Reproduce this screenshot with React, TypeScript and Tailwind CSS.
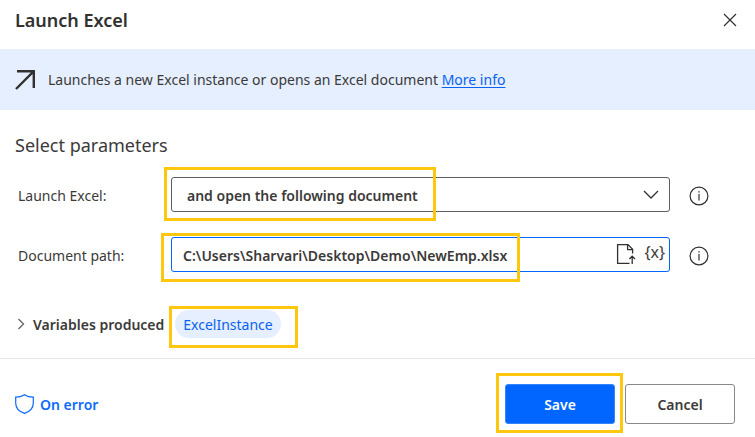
import type { ReactNode } from "react";

function Highlight({ className }: { className: string }) {
  return (
    <span
      aria-hidden="true"
      className={`pointer-events-none absolute border-3 border-[#fdc70e] ${className}`}
    />
  );
}

function InfoButton({ label }: { label: string }) {
  return (
    <button type="button" aria-label={label} className="ml-[19px] shrink-0 pt-[2px]">
      <svg className="block" width="20" height="20" viewBox="0 0 20 20" fill="none" stroke="#323130">
        <circle cx="10" cy="10" r="8.9" strokeWidth="1.2" />
        <path d="M10 8v6.5" strokeWidth="1.2" />
        <path d="M10 5.2v1.4" strokeWidth="1.4" />
      </svg>
    </button>
  );
}

function Field({ id, label, children }: { id: string; label: string; children: ReactNode }) {
  return (
    <div className="flex items-center">
      <label htmlFor={id} className="w-[153px] shrink-0 pt-[2px]">
        {label}:
      </label>
      <div className="relative flex-1">{children}</div>
      <InfoButton label={`About ${label}`} />
    </div>
  );
}

export default function App() {
  return (
    <main className="bg-white font-['Noto_Sans','Open_Sans',sans-serif] text-sm text-[#3b3a39]">
      <header className="flex h-[49px] items-center justify-between pr-[18px] pb-[9px] pl-[15px]">
        <h1 className="text-lg leading-7 font-semibold text-[#323130]">Launch Excel</h1>
        <button type="button" aria-label="Close">
          <svg width="14" height="14" viewBox="0 0 14 14" fill="none" stroke="#323130" strokeWidth="1.2">
            <path d="M1 1l12 12M13 1L1 13" />
          </svg>
        </button>
      </header>

      <section className="flex min-h-[61px] items-center gap-[13px] bg-[#e5efff] px-[15px]">
        <svg width="20" height="20" viewBox="0 0 20 20" fill="none" stroke="#323130" strokeWidth="2.4">
          <path d="M2 1.2H18.8V18M18.6 1.4L1 19" />
        </svg>
        <p>
          Launches a new Excel instance or opens an Excel document{" "}
          <a href="#more-info" className="text-[#0b62f0] underline underline-offset-2">
            More info
          </a>
        </p>
      </section>

      <form>
        <h2 className="px-[15px] pt-[21px] text-lg leading-7">Select parameters</h2>

        <div className="flex flex-col gap-[25px] pt-[18px] pr-[46px] pl-[18px]">
          <Field id="launch" label="Launch Excel">
            <select
              id="launch"
              className="block h-[35px] w-full appearance-none rounded-[3px] border border-[#605e5c] bg-white pt-[2px] pr-10 pl-[15px] font-semibold outline-none"
            >
              <option>and open the following document</option>
              <option>with a blank document</option>
            </select>
            <svg
              className="pointer-events-none absolute top-3 right-[11px]"
              width="16"
              height="12"
              viewBox="0 0 16 12"
              fill="none"
              stroke="#323130"
              strokeWidth="1.3"
            >
              <path d="M1 2l7 7 7-7" />
            </svg>
            <Highlight className="-top-[10px] -left-[7px] h-[54px] w-[272px]" />
          </Field>

          <Field id="path" label="Document path">
            <div className="flex h-[35px] items-center rounded-[3px] border border-[#0066ff] bg-white pr-1 pl-[11px]">
              <input
                id="path"
                type="text"
                defaultValue={"C:\\Users\\Sharvari\\Desktop\\Demo\\NewEmp.xlsx"}
                className="min-w-0 flex-1 bg-transparent pt-[2px] font-semibold outline-none"
              />
              <button type="button" aria-label="Select file" className="pb-[2px]">
                <svg className="block" width="20" height="22" viewBox="0 0 20 22" fill="none" stroke="#323130" strokeWidth="1.3">
                  <path d="M13.5 20.4H1.6V1.6H12L16.6 6.2V10.5M11.6 1.6V6.6H16.6M16.2 21V13.2M13.4 16l2.8-2.8L19 16" />
                </svg>
              </button>
              <button type="button" aria-label="Select variable" className="ml-2 pb-[6px] text-base leading-5">
                {"{x}"}
              </button>
            </div>
            <Highlight className="-top-1 -left-[10px] h-[49px] w-[359px]" />
          </Field>
        </div>

        <section className="mt-[38px] flex items-center border-b border-[#e6e5e4] pb-5 pl-[17px]">
          <button type="button" aria-expanded="false" className="flex items-center gap-2 font-semibold">
            <svg width="8" height="12" viewBox="0 0 8 12" fill="none" stroke="#605e5c" strokeWidth="1.2">
              <path d="M1.5 1L6.5 6l-5 5" />
            </svg>
            <span className="pt-[2px]">Variables produced</span>
          </button>
          <div className="relative ml-[11px]">
            <button type="button" className="block h-7 rounded-full bg-[#e5efff] px-2 pt-[2px] text-[#0b62f0]">
              ExcelInstance
            </button>
            <Highlight className="-top-1 -left-[6px] h-[42px] w-[129px]" />
          </div>
        </section>

        <footer className="flex items-center gap-[10px] pt-[25px] pr-5 pb-[13px] pl-[15px]">
          <button type="button" className="mr-auto flex items-center gap-[6px] font-semibold text-[#0b6bff]">
            <svg width="19" height="20" viewBox="0 0 19 20" fill="none" stroke="#0b6bff" strokeWidth="1.2">
              <path d="M9.5 0.7C7 2.4 4 3.2 0.7 3.2V9C0.7 14 4 17.5 9.5 19.4C15 17.5 18.3 14 18.3 9V3.2C15 3.2 12 2.4 9.5 0.7Z" />
            </svg>
            <span className="pt-[2px]">On error</span>
          </button>
          <div className="relative">
            <button
              type="submit"
              className="block h-10 w-[110px] rounded-[3px] border border-[#3385ff] bg-[#0066ff] pt-[2px] font-semibold text-white"
            >
              Save
            </button>
            <Highlight className="-top-[11px] -left-[9px] h-[60px] w-[127px]" />
          </div>
          <button
            type="button"
            className="h-10 w-[110px] rounded-[3px] border border-[#8a8886] bg-white pt-[2px] font-semibold"
          >
            Cancel
          </button>
        </footer>
      </form>
    </main>
  );
}
